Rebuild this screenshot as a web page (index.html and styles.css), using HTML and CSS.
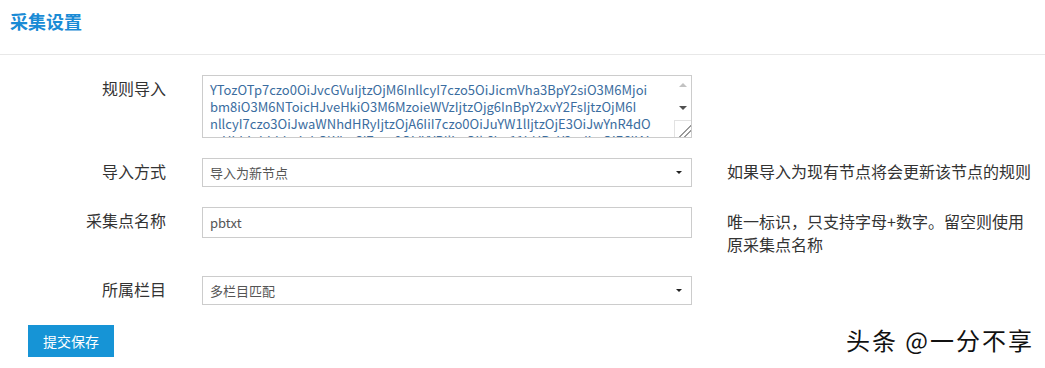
FILE: index.html
```html
<!DOCTYPE html>
<html>
<head>
  <meta charset="utf-8">
  <meta name="viewport" content="width=device-width, initial-scale=1">
  <title>采集设置</title>
  <link rel="stylesheet" href="styles.css">
</head>
<body>
<div class="page">
  <div class="page__head">
    <h2 class="page__title">采集设置</h2>
  </div>

  <form class="form" action="#">
    <div class="form__row">
      <label class="form__label">规则导入</label>
      <div class="form__control">
        <div class="memo">
          <textarea class="memo__text" spellcheck="false">YTozOTp7czo0OiJvcGVuIjtzOjM6InllcyI7czo5OiJicmVha3BpY2siO3M6Mjoi
bm8iO3M6NToicHJveHkiO3M6MzoieWVzIjtzOjg6InBpY2xvY2FsIjtzOjM6I
nllcyI7czo3OiJwaWNhdHRyIjtzOjA6IiI7czo0OiJuYW1lIjtzOjE3OiJwYnR4dO
mUhbjpbhhbuinhOWImSI7czo0OiJYYPIljtzOjk6Im11bHBpY2sxIjtzOjE6IjAi</textarea>
          <div class="memo__bar">
            <span class="memo__up"></span>
            <span class="memo__down"></span>
            <span class="memo__grip"></span>
          </div>
        </div>
      </div>
    </div>

    <div class="form__row">
      <label class="form__label">导入方式</label>
      <div class="form__control">
        <div class="pick">
          <select class="pick__select">
            <option>导入为新节点</option>
            <option>导入为现有节点</option>
          </select>
        </div>
      </div>
      <div class="form__help">如果导入为现有节点将会更新该节点的规则</div>
    </div>

    <div class="form__row">
      <label class="form__label">采集点名称</label>
      <div class="form__control">
        <input class="form__input" type="text" value="pbtxt">
      </div>
      <div class="form__help form__help_low">唯一标识，只支持字母+数字。留空则使用<br>原采集点名称</div>
    </div>

    <div class="form__row">
      <label class="form__label">所属栏目</label>
      <div class="form__control">
        <div class="pick">
          <select class="pick__select">
            <option>多栏目匹配</option>
          </select>
        </div>
      </div>
    </div>

    <button class="btn" type="submit">提交保存</button>
  </form>

  <div class="mark">头条 @一分不享</div>
</div>
</body>
</html>
```

FILE: styles.css
```css
body {
    margin: 0;
    background: #fff;
    color: #333;
    font-family: "Noto Sans CJK SC", "Microsoft YaHei", sans-serif;
  }
.page {
    position: relative;
    height: 368px;
  }
.page__head {
    height: 45px;
    padding: 9px 10px 0;
    border-bottom: 1px solid #e8e8e8;
  }
.page__title {
    margin: 0;
    font-size: 18px;
    line-height: 25px;
    font-weight: bold;
    color: #1a8bd5;
  }
.form {
    padding-top: 20px;
  }
.form__row {
    display: flex;
    align-items: flex-start;
    margin-bottom: 20px;
  }
.form__label {
    flex: 0 0 166px;
    padding-top: 2px;
    text-align: right;
    font-size: 16px;
    line-height: 23px;
  }
.form__control {
    flex: 0 0 490px;
    margin-left: 36px;
  }
.form__help {
    width: 310px;
    margin-left: 35px;
    padding-top: 2px;
    font-size: 16px;
    line-height: 23px;
  }
.form__help_low {
    padding-top: 3px;
  }
.form__input {
    box-sizing: border-box;
    display: block;
    width: 100%;
    height: 31px;
    margin: 0;
    padding: 0 7px;
    border: 1px solid #ccc;
    border-radius: 0;
    font-family: inherit;
    font-size: 13px;
    color: #555;
    outline: none;
  }

/* textarea with its own scrollbar column */
.memo {
    box-sizing: border-box;
    display: flex;
    height: 63px;
    border: 1px solid #ccc;
  }
.memo__text {
    flex: 1;
    margin: 0;
    padding: 5px 0 0 7px;
    border: 0;
    resize: none;
    overflow: hidden;
    white-space: pre;
    font-family: inherit;
    font-size: 13px;
    line-height: 17px;
    color: #3b6da0;
    outline: none;
  }
.memo__bar {
    display: flex;
    flex-direction: column;
    align-items: center;
    flex: 0 0 17px;
  }
.memo__up,
.memo__down {
    width: 0;
    height: 0;
    border-left: 4px solid transparent;
    border-right: 4px solid transparent;
  }
.memo__up {
    margin-top: 7px;
    border-bottom: 4px solid #c2c2c2;
  }
.memo__down {
    margin-top: 19px;
    border-top: 4px solid #505050;
  }
.memo__grip {
    box-sizing: border-box;
    width: 17px;
    height: 17px;
    margin-top: auto;
    border-top: 1px solid #e2e2e2;
    border-left: 1px solid #e2e2e2;
    background: linear-gradient(135deg, transparent 60%, #999 60%, #999 66%, transparent 66%, transparent 78%, #999 78%, #999 84%, transparent 84%);
  }

/* select with a small arrow */
.pick {
    position: relative;
  }
.pick:after {
    content: "";
    position: absolute;
    right: 10px;
    top: 13px;
    border-left: 3px solid transparent;
    border-right: 3px solid transparent;
    border-top: 3px solid #222;
    pointer-events: none;
  }
.pick__select {
    box-sizing: border-box;
    display: block;
    width: 100%;
    height: 29px;
    margin: 0;
    padding: 0 7px;
    border: 1px solid #ccc;
    border-radius: 0;
    background: #fff;
    -webkit-appearance: none;
    appearance: none;
    font-family: inherit;
    font-size: 13px;
    color: #555;
    outline: none;
  }

.btn {
    display: block;
    width: 86px;
    height: 32px;
    margin: 0 0 0 28px;
    padding: 0;
    border: 0;
    border-radius: 0;
    background: #1694d6;
    color: #fff;
    font-family: inherit;
    font-size: 14px;
    cursor: pointer;
  }

.mark {
    position: absolute;
    right: 11px;
    top: 325px;
    font-size: 24px;
    line-height: 30px;
    letter-spacing: 2px;
    color: #111;
    text-shadow: 0 0 2px #fff, 0 0 1px #fff;
  }
```
